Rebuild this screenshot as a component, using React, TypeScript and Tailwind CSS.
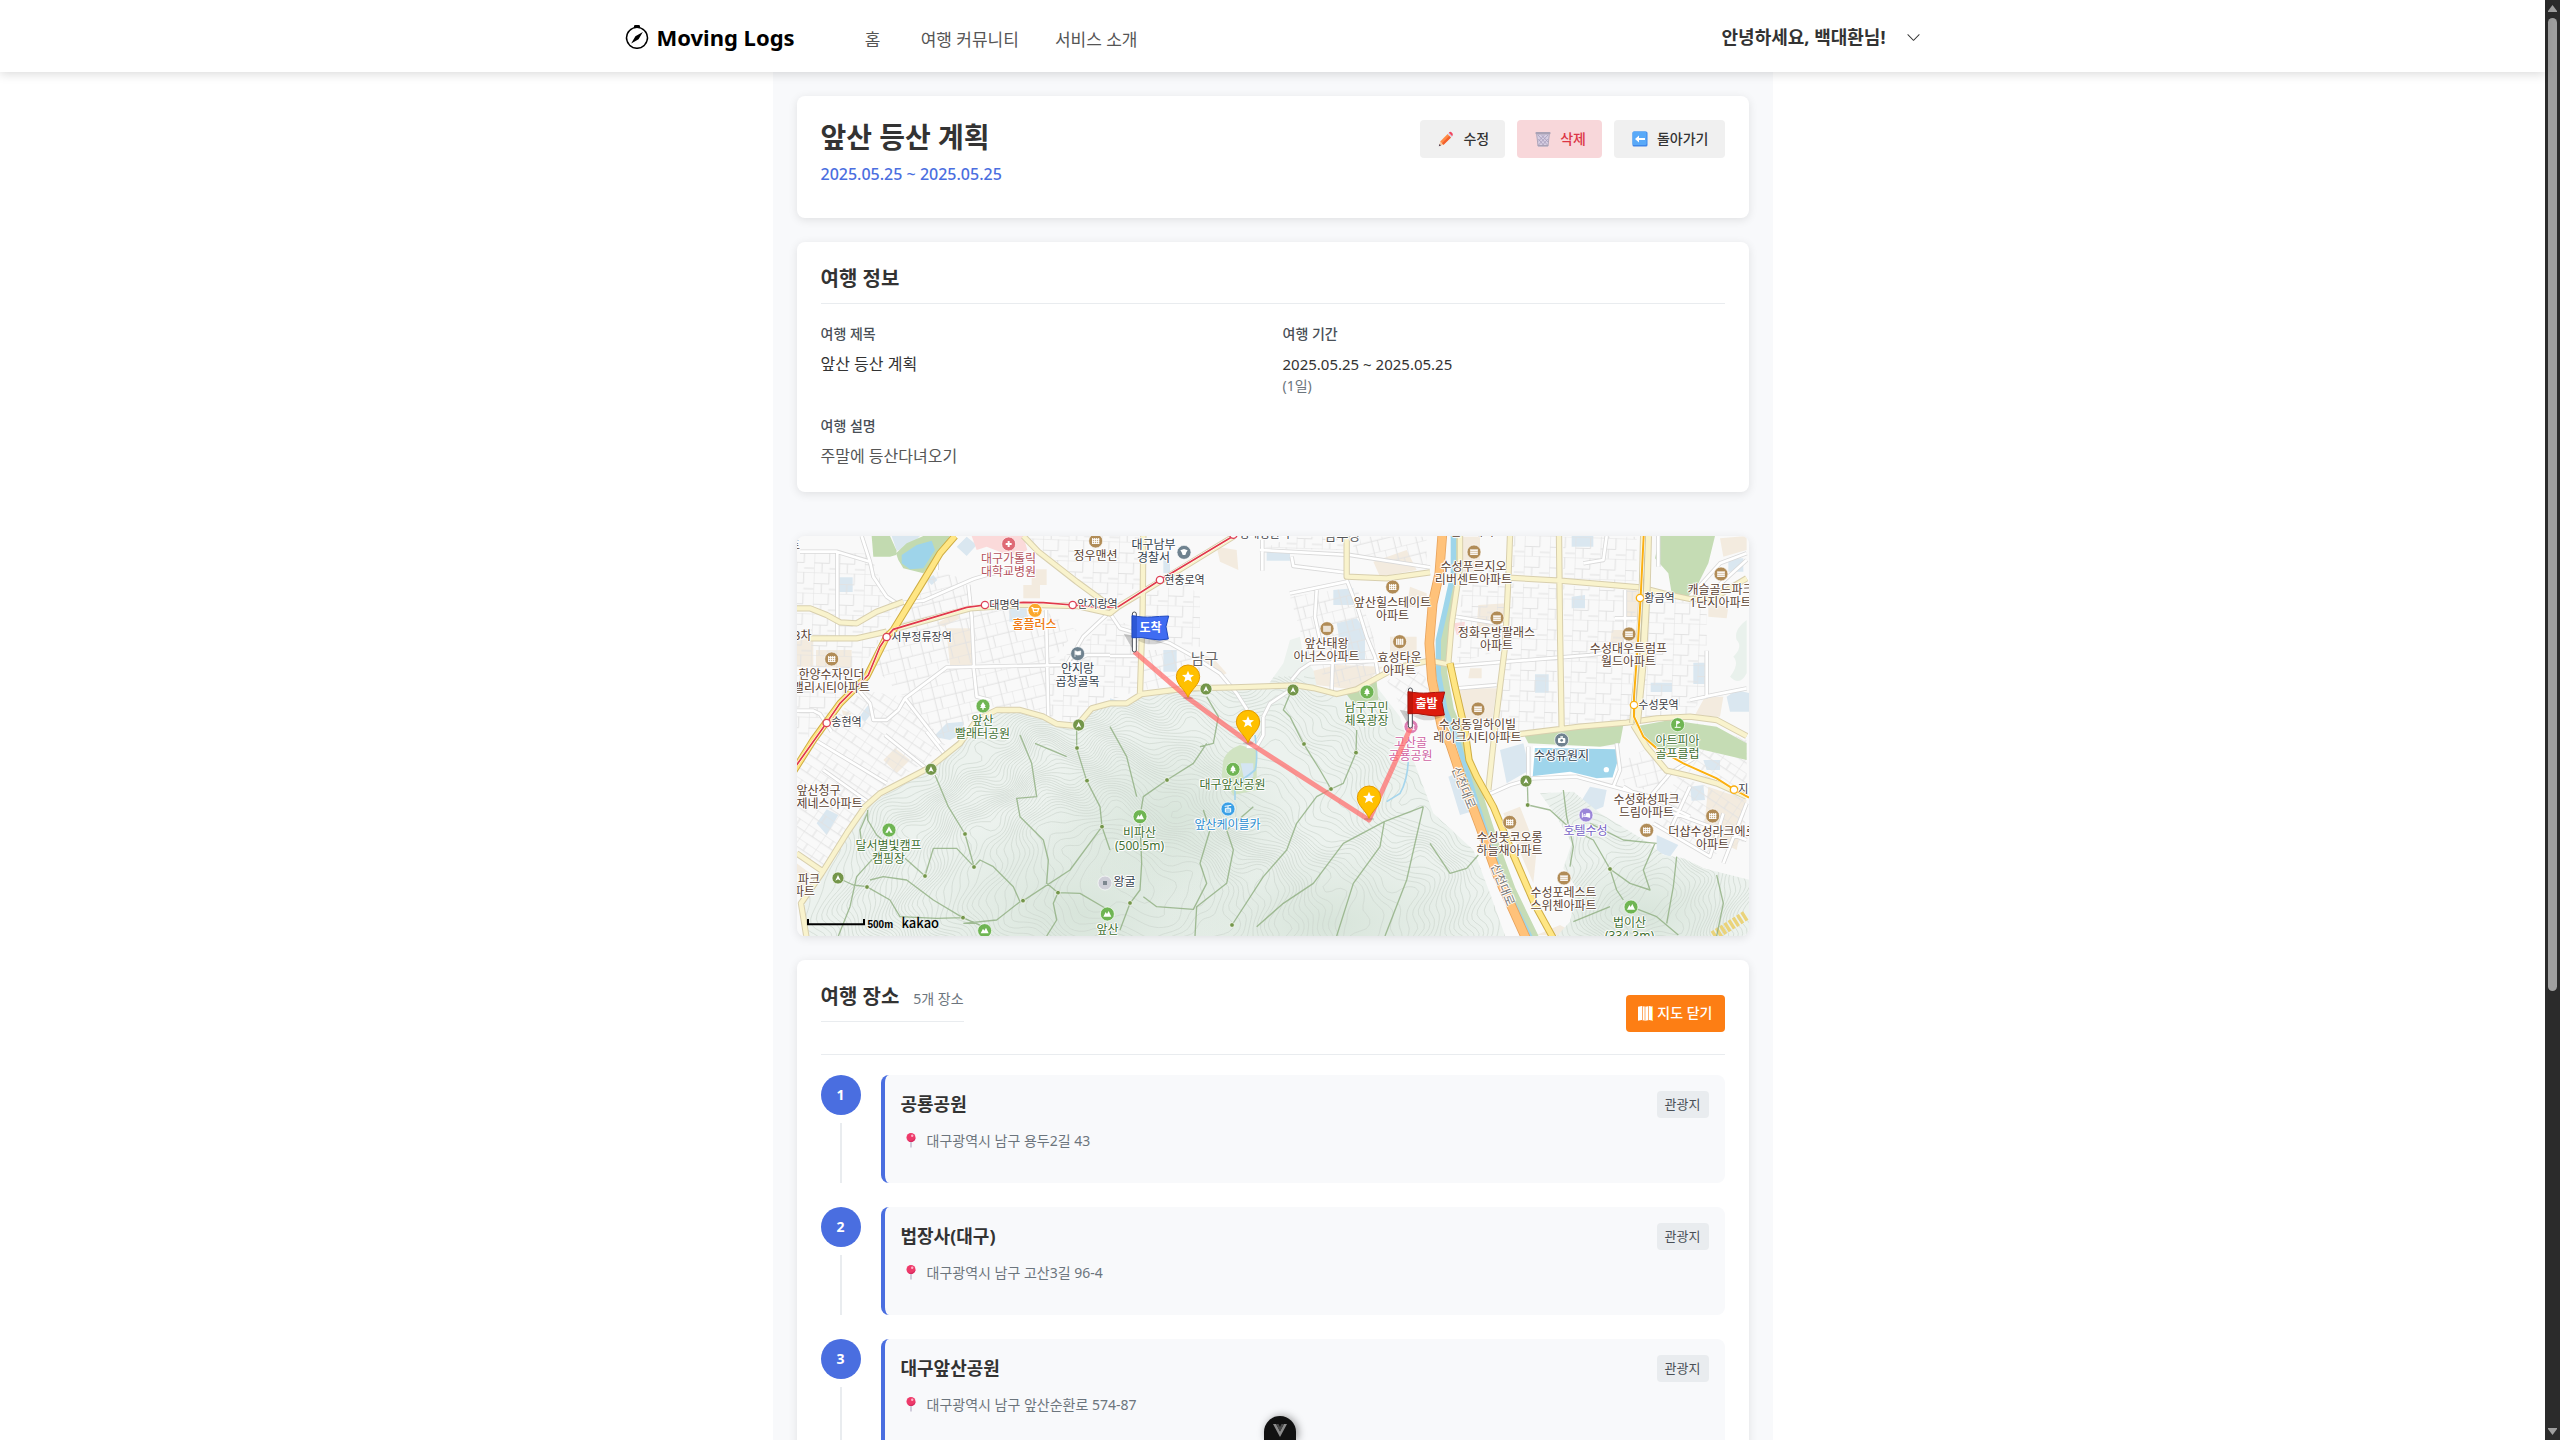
import React from "react";
import { BsChevronDown, BsCompass } from "react-icons/bs";

const places = [
  { name: "공룡공원", address: "대구광역시 남구 용두2길 43", kind: "관광지" },
  { name: "법장사(대구)", address: "대구광역시 남구 고산3길 96-4", kind: "관광지" },
  { name: "대구앞산공원", address: "대구광역시 남구 앞산순환로 574-87", kind: "관광지" },
];

/* ---------- small drawings ---------- */

function PencilIcon() {
  return (
    <svg viewBox="0 0 16 16" className="size-4" aria-hidden="true">
      <path d="M.8 15.200l1.600-5 3.400 3.400z" fill="#f7c9a0" />
      <path d="M.8 15.200l.7-2.200 1.500 1.500z" fill="#4a3a50" />
      <path d="M2.200 10.400l7.400-7.400 3.400 3.400-7.400 7.400z" fill="#ff8a45" />
      <path d="M4 12.200l7.400-7.400 1.600 1.600-7.400 7.400z" fill="#f2602e" />
      <path d="M9.600 3l1.200-1.200 3.400 3.400-1.200 1.200z" fill="#d9d3e3" />
      <path d="M10.800 1.800c1-1.200 2-1.200 2.900-.4 1 .9 1.700 2.100.5 3.800z" fill="#f0455f" />
    </svg>
  );
}

function TrashIcon() {
  return (
    <svg viewBox="0 0 16 16" className="size-4" aria-hidden="true">
      <path d="M1.500 3h13l-1.400 12.500H2.900z" fill="#d6cee2" />
      <path
        d="M3 4l9.500 10M6.500 4l6.500 7M3.300 8l6 7M13 4L3.500 14M9.500 4L3.200 10.500M12.800 8l-6 7"
        stroke="#a69cba"
        strokeWidth=".8"
      />
      <path d="M1.700 3.400L3 15M14.300 3.400L13 15" stroke="#a9a2b5" strokeWidth=".9" />
      <rect x="0.500" y="1" width="15" height="2.400" rx=".8" fill="#a9a2b5" />
      <path d="M2.800 14h10.400l-.2 1.500H3z" fill="#a9a2b5" />
    </svg>
  );
}

function BackIcon() {
  return (
    <svg viewBox="0 0 16 16" className="size-4" aria-hidden="true">
      <rect x=".5" y=".5" width="15" height="15" rx="1.500" fill="#3f86e8" />
      <rect x=".5" y=".5" width="14" height="13.500" rx="1.500" fill="#58a9f8" />
      <path d="M3 8l4-3.500v2.500h6v2H7v2.500z" fill="#fff" />
    </svg>
  );
}

function MapIcon() {
  return (
    <svg viewBox="0 0 15 15" className="size-[15px]" aria-hidden="true">
      <path d="M0 .8l3.700-.8 3.700.8 3.700-.8L15 .8v14l-3.900-.8-3.700.8-3.700-.8L0 14.800z" fill="#fff" />
      <path d="M4.500 0v14M7 .8v14M10.500 0v14" stroke="#ffab66" strokeWidth="1" />
      <path d="M14.500.8v14" stroke="#ffe14a" strokeWidth="1" />
    </svg>
  );
}

function PushpinIcon() {
  return (
    <svg viewBox="0 0 10 15" className="h-[15px] w-[10px]" aria-hidden="true">
      <path d="M5 8v6.500" stroke="#b7aec6" strokeWidth="1.200" />
      <circle cx="5" cy="4.500" r="4.500" fill="#ee3a6a" />
      <path d="M1.500 7.300A4.500 4.500 0 0 0 9.500 4.500 6 6 0 0 1 1.500 7.300z" fill="#d42a60" />
      <circle cx="6.200" cy="2.800" r="1.200" fill="#ffb3c8" />
    </svg>
  );
}

/* ---------- map ---------- */

type Peak = [number, number, number, number];
const peaks: Peak[] = [
  [600, 1230, 300, 1.1], [980, 1180, 300, 1.2], [1050, 860, 220, 0.9], [760, 800, 190, 0.7],
  [420, 1000, 170, 0.45], [1400, 1080, 200, 0.6], [1280, 1260, 240, 0.7], [1600, 700, 150, 0.5],
  [1190, 600, 140, 0.4], [1700, 1200, 260, 0.8], [1900, 1120, 160, 0.5], [2540, 1160, 190, 1],
  [2420, 900, 120, 0.3], [2700, 1080, 130, 0.4], [1460, 560, 120, 0.35],
];

function heightAt(x: number, y: number) {
  const wx = x + 26 * Math.sin(y / 43) + 12 * Math.sin(x / 31 + y / 19);
  const wy = y + 24 * Math.sin(x / 37) + 11 * Math.sin(y / 23 - x / 29);
  let h = 0;
  for (const [px, py, s, a] of peaks) {
    h += a * Math.exp(-((wx - px) ** 2 + (wy - py) ** 2) / (2 * s * s));
  }
  return h;
}

function contourPath() {
  const step = 14;
  const gap = 0.045;
  const cols = Math.ceil(2880 / step);
  const rows = Math.ceil(820 / step);
  const grid: number[][] = [];
  for (let j = 0; j <= rows; j++) {
    grid.push([]);
    for (let i = 0; i <= cols; i++) grid[j].push(heightAt(i * step, 440 + j * step) / gap);
  }
  const out: string[] = [];
  for (let j = 0; j < rows; j++) {
    for (let i = 0; i < cols; i++) {
      const c = [grid[j][i], grid[j][i + 1], grid[j + 1][i + 1], grid[j + 1][i]];
      const lo = Math.ceil(Math.min(...c));
      const hi = Math.floor(Math.max(...c));
      const pos = [[i, j], [i + 1, j], [i + 1, j + 1], [i, j + 1]];
      for (let l = lo; l <= hi; l++) {
        const pts: string[] = [];
        for (let k = 0; k < 4; k++) {
          const a = c[k];
          const b = c[(k + 1) % 4];
          if (a < l !== b < l) {
            const t = (l - a) / (b - a);
            const p = pos[k];
            const q = pos[(k + 1) % 4];
            const x = (p[0] + (q[0] - p[0]) * t) * step;
            const y = 440 + (p[1] + (q[1] - p[1]) * t) * step;
            pts.push(`${x.toFixed(0)} ${y.toFixed(0)}`);
          }
        }
        if (pts.length >= 2) out.push(`M${pts[0]}L${pts[1]}`);
      }
    }
  }
  return out.join("");
}

const contours = contourPath();

const westHills =
  "M50 1230L33 1120 95 1030 170 910 225 830 300 785 430 715 520 640 560 560 690 540 800 582 860 588 910 535 1010 525 1055 492 1190 478 1430 470 1480 400 1500 330 1530 320 1540 380 1570 420 1580 468 1640 492 1760 470 1830 560 1870 690 1930 850 2050 960 2100 1090 2150 1230Z";
const eastHills =
  "M2250 790L2350 785 2430 850 2480 880 2570 935 2620 975 2680 985 2740 1015 2820 1035 2880 1050 2880 1230 2290 1230 2340 1175 2360 1075 2320 1015 2345 940 2300 860Z";

const whiteRoads = [
  "M30 65H140L240 95 250 140 290 200 320 220 400 212 550 147 590 135 660 120", "M142 65V320",
  "M215 18L240 95", "M535 165L545 260 552 405", "M768 240L775 560", "M345 505L470 412 830 405 880 320 960 245",
  "M830 405L890 375H960", "M205 480L240 520 250 570 290 570 325 540 345 505 450 640", "M20 542H70L90 552 125 605",
  "M550 405L560 500 600 510", "M440 120V90", "M285 615L440 740M410 605L470 680", "M75 630L290 760", "M100 720L240 820",
  "M1410 60L1680 75 1920 112", "M1417 30V122", "M1505 80L1510 108 1670 128", "M1500 190L1670 155",
  "M1670 150L1705 240 1730 320 1755 380 1765 440", "M1580 180L1575 260 1590 330", "M1505 450L1530 420 1560 400 1790 392",
  "M1630 340L1625 480", "M1420 560L1440 520 1500 480M1420 560V615L1400 650H1370", "M960 250L990 295 1140 340 1220 385 1290 430 1340 490 1372 540",
  "M960 378H1060", "M1990 408L2400 375 2450 368", "M2475 265H2540M2505 180V350", "M1995 260L2150 285", "M2000 475L2120 465",
  "M2750 362V500L2700 510M2745 500L2870 475", "M2605 18V110", "M2450 18L2440 90 2380 100", "M2080 800L2160 765 2230 745 2360 740 2470 770 2580 800 2700 860",
  "M2215 650V740", "M2480 640L2490 720 2470 770", "M2580 800L2640 730 2720 680", "M2590 880L2760 980 2800 850", "M2700 770L2640 900", "M2870 820L2800 1000",
  "M2500 770L2600 830 2870 930", "M2760 190L2870 90M2700 200L2790 100 2870 70",
];

const creamRoads = [
  "M20 235H60L110 255 150 277 200 280 260 245 340 215", "M60 325H200L290 305", "M310 298L540 235 700 224 860 228 960 250 985 230 1180 112 1330 20",
  "M700 18L745 65 860 155 965 232", "M1060 18L1058 240 1050 490", "M1670 18V140L1790 145 1920 127",
  "M50 1225L33 1120 95 1030 170 910 225 830 270 790 420 712 510 640 560 570 620 540H690L760 560 800 582 860 588 905 535 960 520H1010L1055 492 1190 475 1330 472 1520 466 1570 474 1640 492 1700 478 1750 450 1820 412 1920 392 1985 405",
  "M20 970L100 1025", "M2010 18V110L1985 280 1975 400", "M2160 18L2155 150 2145 350 2120 550 2095 780",
  "M2155 143L2310 152 2550 172 2620 190 2700 207 2770 205 2870 145", "M2307 18L2310 300 2315 600",
  "M2110 622L2370 590 2510 578 2600 565 2700 560 2780 570 2870 618", "M2530 585L2570 650 2630 722 2700 738 2780 760 2870 800",
];

const trails = [
  "M435 735L475 830 525 912 552 1010", "M233 840V870L260 915 290 940M232 850L210 900 215 940", "M145 1218L180 1130 200 1040 290 940",
  "M345 985L405 1038 430 955 500 955 552 1010 570 990 610 1010 670 1070 690 1115 620 1170 520 1180",
  "M144 1044L190 1065 230 1070 300 1110 330 1160 440 1165 518 1163 580 1190", "M240 1050L280 1040 350 1050 430 1110 518 1163",
  "M690 615L725 700 740 800 680 805 690 860 760 930 775 990 770 1060 804 1088", "M735 640L830 680M860 570V655L890 752 930 830 936 890 840 1020 700 1112",
  "M804 1088L790 1120 800 1170 770 1218", "M804 1088L870 1090 950 1137", "M936 890L960 960", "M1250 640L1210 700 1131 750 1060 800 1050 860",
  "M1050 870L1055 1000 1050 1080 1020 1120 990 1200", "M1250 500L1285 560 1270 640 1230 650", "M960 590L1010 680 1040 800",
  "M1060 1100L1100 1130 1210 1138 1250 1060 1230 1000 1260 900 1240 840", "M1215 1218L1220 1130 1310 1060 1330 960 1310 900 1390 830",
  "M1326 1185L1420 1040 1490 960 1520 880 1580 800 1623 777", "M1505 480L1480 540 1500 560 1540 640 1590 720 1623 777 1660 760 1698 668 1700 600",
  "M1400 1190L1480 1120 1570 1060 1660 940 1783 875 1900 830", "M1783 875L1770 950 1690 1060 1640 1218", "M1900 830L1850 1050 1785 1218", "M1920 940L1980 1030 2030 1015 2065 975",
  "M2212 755L2214 825 2280 840 2340 895 2410 930 2460 1017 2480 1080 2500 1110", "M2320 780L2330 860 2350 950 2340 1010",
  "M2460 1017L2520 1060 2580 1080 2560 1020 2595 940", "M2523 1130L2600 1160 2665 1215", "M2460 1130L2350 1175M2660 980L2650 1070 2630 1180M2780 1035L2800 1120 2780 1218",
  "M2400 880L2500 930 2600 940",
];

const lightBlue = [
  "M305 18H390L360 50 320 62Z", "M500 50L530 20 560 45 530 78Z", "M148 142H188V186H148Z", "M80 880L110 838 145 855 110 915Z", "M208 560L235 525 245 550 225 575Z",
  "M410 150L430 135 442 150 425 165Z", "M430 620L470 580 520 575V610L480 630Z", "M658 235H710V275H658Z", "M1120 80H1140V130H1120Z",
  "M1430 62H1500V92H1430Z", "M1630 180L1690 175V225H1630Z", "M1640 280L1700 265 1725 300V400L1660 395Z", "M960 505L1010 520 1010 560 960 580Z", "M1080 500H1115V545H1080Z", "M1120 360H1160V425H1120Z",
  "M2345 18H2410V50H2345ZM2345 200L2385 195V235H2345Z", "M2235 433H2276V488H2235Z", "M2710 398H2744V462H2710Z", "M2582 458H2646V486H2582Z", "M2815 85H2860V125H2815Z", "M2810 500L2840 480 2880 490V545H2820Z",
  "M2130 660L2200 640 2220 720 2150 760Z", "M1975 740L2020 720 2060 840 2010 855Z", "M2370 820L2400 770 2450 780 2440 830 2380 855Z", "M2600 915L2665 945 2640 980 2600 965Z", "M2700 770L2740 765 2745 810 2705 812Z", "M2740 690H2790V720H2750Z",
];
const beige = [
  "M440 280L500 250 510 265 460 290Z", "M468 295L545 295 548 405H480Z", "M20 325H70V410H20ZM78 360H185V412H78Z", "M725 118H770V165H750V205H700V165H725Z",
  "M280 690L315 655 360 690 320 730Z", "M155 540L185 550 165 575Z", "M1280 50L1340 60 1345 120 1290 95Z", "M1225 370L1290 440 1310 430 1270 385Z",
  "M1750 95L1850 60 1880 120 1770 140ZM1860 170L1910 190V230H1850Z", "M1540 430L1640 405 1780 410 1700 480 1580 465Z", "M1800 320L1880 320 1880 380 1800 380Z",
  "M2010 20H2070V120L2020 130ZM2065 225L2150 220V290H2060Z", "M2000 475H2120L2105 580H2030Z", "M2505 180H2545V270H2505Z", "M2790 25L2870 18V60L2800 80Z",
  "M2715 555L2745 500 2800 500 2790 560Z", "M2140 850L2190 830 2240 960 2230 1060Z", "M2755 770L2870 810 2840 960 2740 910Z", "M2330 1060L2370 1000 2350 1000Z", "M2465 300H2540V350H2460Z", "M2755 225L2815 230 2810 265 2755 260Z", "M20 1000L60 1030 40 1080H20Z", "M2240 1215L2310 1185 2370 1218Z", "M2040 415H2075V445H2035Z",
];

/* Each district is a hatched block of side streets: outline and street direction. */
const districts: [string, string][] = [
  ["M20 70H240L290 200 330 230 250 320H20Z", "url(#streetsA)"],
  ["M20 330H270L200 440 60 620H20Z", "url(#streetsA)"],
  ["M60 640L215 480 340 500 470 640 400 700 260 785 100 1020 20 970V710Z", "url(#streetsC)"],
  ["M420 120L540 150 530 230 330 285Z", "url(#streetsB)"],
  ["M300 310L540 240 760 240 860 300 780 400H470L340 500 240 400Z", "url(#streetsB)"],
  ["M345 510L470 415H770V550L690 530 600 530 500 600 450 630Z", "url(#streetsB)"],
  ["M700 18L960 220 985 200 1060 160V18Z", "url(#streetsA)"],
  ["M780 410L890 330 960 260 1050 300V480L960 510 860 580 780 560Z", "url(#streetsA)"],
  ["M1070 190L1190 160 1230 200V350L1060 340Z", "url(#streetsA)"],
  ["M1060 360L1160 360 1230 400V460L1060 480Z", "url(#streetsB)"],
  ["M1510 20H1660V60L1420 55Z", "url(#streetsA)"],
  ["M1690 20H1910V110L1690 75Z", "url(#streetsB)"],
  ["M1500 200L1700 170 1750 320 1770 440 1640 470 1560 400Z", "url(#streetsB)"],
  ["M1790 450L1900 420 1940 560 1850 560Z", "url(#streetsC)"],
  ["M2020 120H2150L2135 360 2000 400Z", "url(#streetsA)"],
  ["M2165 160L2300 165V590L2120 610Z", "url(#streetsA)"],
  ["M2170 18H2300V145L2165 130Z", "url(#streetsA)"],
  ["M2320 20H2540V165L2320 150ZM2320 165L2540 180 2520 570 2325 590Z", "url(#streetsA)"],
  ["M2570 200L2750 215V360L2745 500 2700 550 2550 570Z", "url(#streetsA)"],
  ["M2560 660L2650 730 2600 790 2500 760 2490 700Z", "url(#streetsB)"],
  ["M2660 740L2860 800 2870 930 2760 980 2600 880Z", "url(#streetsC)"],
  ["M2700 570L2870 630V790L2700 730 2600 640Z", "url(#streetsC)"],
];

type PoiKind =
  | "apt" | "hospital" | "cart" | "flag" | "tree" | "trail" | "police" | "museum" | "golf"
  | "camera" | "camp" | "peak" | "spot" | "cable" | "hotel";

const pois: [PoiKind, number, number][] = [
  ["apt", 125, 387], ["apt", 917, 33], ["hospital", 656, 42], ["cart", 735, 241], ["flag", 863, 371], ["tree", 579, 528],
  ["trail", 866, 585], ["police", 1182, 67], ["apt", 1808, 171], ["apt", 1611, 296], ["apt", 1829, 335], ["trail", 1248, 477],
  ["trail", 1509, 480], ["tree", 1731, 486], ["museum", 1863, 590], ["apt", 2052, 66], ["apt", 2121, 264], ["apt", 2517, 312],
  ["apt", 2793, 132], ["apt", 2064, 537], ["golf", 2663, 584], ["camera", 2315, 630], ["trail", 423, 718], ["trail", 144, 1044],
  ["camp", 297, 900], ["peak", 584, 1202], ["spot", 945, 1059], ["peak", 952, 1152], ["tree", 1329, 718], ["cable", 1314, 837],
  ["peak", 1050, 860], ["trail", 2208, 753], ["hotel", 2388, 855], ["apt", 2159, 877], ["apt", 2570, 901], ["apt", 2768, 858],
  ["apt", 2322, 1044], ["peak", 2523, 1131],
];

const poiFill: Record<PoiKind, string> = {
  apt: "#b18c57", hospital: "#df6a75", cart: "#fba82c", flag: "#6f828f", tree: "#6fb553", trail: "#74964a", police: "#6f828f",
  museum: "#dd7fb4", golf: "#6fb553", camera: "#6f828f", camp: "#6fb553", peak: "#6fb553", spot: "#cfcfd8", cable: "#3aa0e6", hotel: "#9b86d8",
};

const poiGlyph: Record<PoiKind, React.ReactNode> = {
  apt: <path d="M-9-9V9M-3-9V9M3-9V9M9-9V9M-11-5H11M-11 1H11M-11 7H11" stroke="#fff" strokeWidth="3" />,
  hospital: <path d="M0-9V9M-9 0H9" stroke="#fff" strokeWidth="6" />,
  cart: <path d="M-11-8H-7L-4 4H8L11-5H-6M-3 9h1M6 9h1" stroke="#fff" strokeWidth="4" fill="none" />,
  flag: <path d="M-8-10V10M-7-8L0-6 9-8V3L0 4-7 2Z" stroke="#fff" strokeWidth="2" fill="#fff" />,
  tree: <path d="M0-12L8 0H5L9 6H2V11H-2V6H-9L-5 0H-8Z" fill="#fff" />,
  trail: <path d="M0-9L8 8 0 4-8 8Z" fill="#fff" />,
  police: <path d="M-11-6L0-10 11-6 7 0 4 8H-4L-7 0Z" fill="#fff" />,
  museum: <path d="M-10-4L0-10 10-4ZM-8-2V8M0-2V8M8-2V8M-11 9H11" stroke="#fff" strokeWidth="3" fill="#fff" />,
  golf: <path d="M-3-11V7M-3-11L7-7-3-2M-9 8H9" stroke="#fff" strokeWidth="3" fill="#fff" />,
  camera: (
    <>
      <rect x="-11" y="-6" width="22" height="15" rx="3" fill="#fff" />
      <circle cy="1" r="4" fill="#6f828f" />
      <path d="M-4-9H4" stroke="#fff" strokeWidth="4" />
    </>
  ),
  camp: <path d="M0-11L11 8H4L0 1-4 8H-11Z" fill="#fff" />,
  peak: <path d="M-12 8L-5-6-1 0 4-9 12 8Z" fill="#fff" />,
  spot: <rect x="-6" y="-6" width="12" height="12" fill="#7d8790" />,
  cable: <path d="M-10-8L10-11M0-9V-3M-8-2H8V9H-8ZM-8 3H8" stroke="#fff" strokeWidth="3" fill="none" />,
  hotel: <path d="M-11-7V8M-11 3H11V8M-7-1H-2M1-4H11V3H1Z" stroke="#fff" strokeWidth="3" fill="#fff" />,
};

const apt = "text-[#5a4232]";
const park = "text-[#3f7030]";
const station = "text-[#3c4046] text-[11px]";
const slate = "text-[#34424e]";

const mapLabels: { x: number; y: number; lines: string[]; tone: string }[] = [
  { x: 656, y: 87, lines: ["대구가톨릭", "대학교병원"], tone: "text-[#b4545f]" },
  { x: 917, y: 77, lines: ["정우맨션"], tone: apt },
  { x: 646, y: 226, lines: ["대명역"], tone: station },
  { x: 925, y: 223, lines: ["안지랑역"], tone: station },
  { x: 735, y: 285, lines: ["홈플러스"], tone: "text-[#ee7a10] font-medium" },
  { x: 396, y: 320, lines: ["서부정류장역"], tone: station },
  { x: 38, y: 317, lines: ["3차"], tone: apt },
  { x: 15, y: 48, lines: ["트"], tone: apt },
  { x: 125, y: 434, lines: ["한양수자인더", "밸리시티아파트"], tone: apt },
  { x: 171, y: 577, lines: ["송현역"], tone: station },
  { x: 863, y: 417, lines: ["안지랑", "곱창골목"], tone: slate },
  { x: 579, y: 573, lines: ["앞산", "빨래터공원"], tone: park },
  { x: 1092, y: 46, lines: ["대구남부", "경찰서"], tone: slate },
  { x: 1185, y: 149, lines: ["현충로역"], tone: station },
  { x: 1425, y: 12, lines: ["영대병원역"], tone: station },
  { x: 1658, y: 18, lines: ["남부장"], tone: "text-[#555555] text-[13px]" },
  { x: 1808, y: 218, lines: ["앞산힐스테이트", "아파트"], tone: apt },
  { x: 1611, y: 342, lines: ["앞산태왕", "아너스아파트"], tone: apt },
  { x: 1829, y: 384, lines: ["효성타운", "아파트"], tone: apt },
  { x: 1245, y: 388, lines: ["남구"], tone: "text-[#666666] text-[15px]" },
  { x: 1731, y: 535, lines: ["남구구민", "체육광장"], tone: park },
  { x: 1864, y: 639, lines: ["고산골", "공룡공원"], tone: "text-[#cf62a3]" },
  { x: 2052, y: 112, lines: ["수성푸르지오", "리버센트아파트"], tone: apt },
  { x: 2065, y: 6, lines: ["힐스테이트"], tone: apt },
  { x: 2122, y: 310, lines: ["정화우방팔래스", "아파트"], tone: apt },
  { x: 2516, y: 357, lines: ["수성대우트럼프", "월드아파트"], tone: apt },
  { x: 2793, y: 181, lines: ["캐슬골드파크", "1단지아파트"], tone: apt },
  { x: 2610, y: 203, lines: ["황금역"], tone: station },
  { x: 2607, y: 525, lines: ["수성못역"], tone: station },
  { x: 2063, y: 586, lines: ["수성동일하이빌", "레이크시티아파트"], tone: apt },
  { x: 2663, y: 632, lines: ["아트피아", "골프클럽"], tone: park },
  { x: 87, y: 784, lines: ["앞산청구"], tone: apt },
  { x: 120, y: 822, lines: ["제네스아파트"], tone: apt },
  { x: 42, y: 1049, lines: ["린파크"], tone: apt },
  { x: 28, y: 1087, lines: ["아파트"], tone: apt },
  { x: 297, y: 947, lines: ["달서별빛캠프", "캠핑장"], tone: park },
  { x: 1004, y: 1056, lines: ["왕굴"], tone: slate },
  { x: 953, y: 1200, lines: ["앞산"], tone: park },
  { x: 1329, y: 765, lines: ["대구앞산공원"], tone: park },
  { x: 1314, y: 885, lines: ["앞산케이블카"], tone: "text-[#2a8dd0]" },
  { x: 1051, y: 910, lines: ["비파산", "(500.5m)"], tone: park },
  { x: 2315, y: 679, lines: ["수성유원지"], tone: slate },
  { x: 2387, y: 904, lines: ["호텔수성"], tone: "text-[#7764c6]" },
  { x: 2160, y: 923, lines: ["수성못코오롱", "하늘채아파트"], tone: apt },
  { x: 2570, y: 811, lines: ["수성화성파크", "드림아파트"], tone: apt },
  { x: 2768, y: 907, lines: ["더샵수성라크에르", "아파트"], tone: apt },
  { x: 2322, y: 1090, lines: ["수성포레스트", "스위첸아파트"], tone: apt },
  { x: 2521, y: 1179, lines: ["법이산", "(334.3m)"], tone: park },
  { x: 2893, y: 777, lines: ["지산역"], tone: station },
  { x: 2022, y: 775, lines: ["신천대로"], tone: "text-[#777777] rotate-[68deg]" },
  { x: 2140, y: 1065, lines: ["신천대로"], tone: "text-[#777777] rotate-[68deg]" },
];

const halo = "[text-shadow:1px_0_0_#fff,-1px_0_0_#fff,0_1px_0_#fff,0_-1px_0_#fff,1px_1px_1px_#fff,-1px_-1px_1px_#fff]";

function Star({ x, y }: { x: number; y: number }) {
  return (
    <g transform={`translate(${x} ${y})`}>
      <ellipse cy="64" rx="16" ry="4" fill="#000" opacity=".12" />
      <path d="M0 62C-8 40-35 24-35 0A35 35 0 1 1 35 0C35 24 8 40 0 62Z" fill="#ffc000" stroke="#e39a00" strokeWidth="3" />
      <path d="M0-18L5-6 18-5 8 3 12 16 0 9-12 16-8 3-18-5-5-6Z" fill="#fff" />
    </g>
  );
}

function Flag({ x, y, fill, edge }: { x: number; y: number; fill: string; edge: string }) {
  return (
    <g transform={`translate(${x} ${y})`}>
      <path d="M-2 118L-32 66 -2 72Z" fill="#000" opacity=".2" />
      <path d="M8 84Q50 112 100 84L60 74Z" fill="#000" opacity=".15" />
      <rect x="-6" y="1" width="12" height="120" rx="6" fill="#fff" stroke="#4a4f57" strokeWidth="3" />
      <path d="M-7 12Q30 18 52 16T103 13L95 45 102 82Q75 88 50 82T-7 78Z" fill={fill} stroke={edge} strokeWidth="3" />
      <path d="M-7 12H8V78H-7Z" fill={edge} opacity=".55" />
    </g>
  );
}

function TripMap() {
  return (
    <section
      aria-label="여행 지도"
      className="mt-11 flex h-[400px] justify-center overflow-hidden rounded-lg bg-[#f8f8f8] shadow-[0_2px_10px_rgba(0,0,0,0.1)]"
    >
      <div className="relative h-full w-[952px] shrink-0">
        <svg viewBox="21 18 2856 1200" className="block size-full" fill="none" aria-hidden="true">
          <defs>
            <pattern id="streetsA" width="76" height="62" patternUnits="userSpaceOnUse" patternTransform="rotate(2)">
              <path d="M0 0H76M0 34H46M46 0V34M24 34V62M0 0V62M46 50H76" stroke="#e2e2e2" strokeWidth="3" />
            </pattern>
            <pattern id="streetsB" width="66" height="70" patternUnits="userSpaceOnUse" patternTransform="rotate(-14)">
              <path d="M0 0H66M0 36H66M0 0V36M34 0V70M52 36V70" stroke="#e2e2e2" strokeWidth="3" />
            </pattern>
            <pattern id="streetsC" width="60" height="50" patternUnits="userSpaceOnUse" patternTransform="rotate(34)">
              <path d="M0 0H60M0 26H60M0 0V50M30 0V26" stroke="#e2e2e2" strokeWidth="3" />
            </pattern>
            <clipPath id="hills">
              <path d={westHills} />
              <path d={eastHills} />
            </clipPath>
            <radialGradient id="ridge">
              <stop offset="0" stopColor="#cfdfd2" stopOpacity=".7" />
              <stop offset="1" stopColor="#cfdfd2" stopOpacity="0" />
            </radialGradient>
          </defs>
          <rect width="2900" height="1240" fill="#f9f9f9" />
          <path d={beige.join("")} fill="#f3ebdf" />
          <path d={lightBlue.join("")} fill="#dae7f0" />
          <path d="M545 18H700L712 60 680 75 640 70 590 50 560 60Z M1990 280L2025 275 2020 310 2000 315Z" fill="#fbdada" />
          {districts.map(([d, fill]) => (
            <path key={d} d={d} fill={fill} />
          ))}
          <path d={westHills + eastHills} fill="#ecf2ee" />
          <g clipPath="url(#hills)">
            <ellipse cx="880" cy="1150" rx="520" ry="330" fill="url(#ridge)" />
            <ellipse cx="1150" cy="860" rx="400" ry="260" fill="url(#ridge)" />
            <ellipse cx="1620" cy="1180" rx="480" ry="240" fill="url(#ridge)" />
            <ellipse cx="2560" cy="1150" rx="300" ry="180" fill="url(#ridge)" />
            <path d={contours} stroke="#cdd7cf" strokeWidth="2" />
          </g>
          <path d="M2870 270Q2830 300 2840 330 2860 350 2830 380 2850 400 2820 440 2850 470 2870 430Z" fill="#e9f1ec" />
          <path d="M245 18H300L320 62 318 75 300 80H250Z M318 70L350 40 400 18H480L440 80 400 130 340 115 325 90Z" fill="#c2dab0" />
          <path d="M2610 18H2775L2755 100 2715 180 2690 205 2645 190 2635 130 2595 85Z" fill="#c5dcb4" />
          <path d="M2200 610L2500 585 2490 640 2430 650 2215 640Z" fill="#c5dcb4" />
          <path d="M2530 590L2640 570 2780 590 2870 640V690L2700 650 2600 660Z" fill="#c5dcb4" />
          <path d="M1660 480L1760 455 1765 510 1690 520Z" fill="#c2dab0" />
          <path d="M1300 690Q1310 660 1350 645L1400 660V780L1330 795 1295 740Z" fill="#d0e3c2" />
          <path d="M1352 700H1390V740L1365 760Z" fill="#d4e5f2" />
          <path d="M335 75L380 45 425 32 435 60 400 115 360 118 335 100Z" fill="#9ed4ea" />
          <path d="M2232 650L2480 655 2490 680 2470 745 2420 748 2340 728 2225 742Z" fill="#9fd5eb" stroke="#fff" strokeWidth="6" />
          <circle cx="2449" cy="719" r="8" fill="#fff" />
          <path d="M1395 615Q1405 690 1395 720 1360 750 1335 760L1335 810M1855 640Q1860 740 1830 790L1790 815" stroke="#a5d5ec" strokeWidth="5" />

          <path d={whiteRoads.join("")} stroke="#d9d9d9" strokeWidth="13" strokeLinejoin="round" />
          <path d={whiteRoads.join("")} stroke="#ffffff" strokeWidth="8" strokeLinejoin="round" />

          <path d="M2000 18V140L1978 240 1955 340V430L1975 540 2015 640 2060 790 2105 930 2160 1080 2230 1225" stroke="#c6dcb6" strokeWidth="34" />
          <path d="M1990 18V130L1968 230 1945 330V430L1965 540 2005 640 2050 790 2095 930 2150 1080 2222 1225" stroke="#9ed5ea" strokeWidth="16" />

          <path d={creamRoads.join("")} stroke="#d8cfae" strokeWidth="19" strokeLinejoin="round" />
          <path d={creamRoads.join("")} stroke="#f9f3cd" strokeWidth="13" strokeLinejoin="round" />
          <path d="M2568 18L2564 180 2552 400 2535 580" stroke="#d8cfae" strokeWidth="36" />
          <path d="M2568 18L2564 180 2552 400 2535 580" stroke="#f9f3cd" strokeWidth="30" />
          <path d="M2566 18L2560 180 2548 400 2532 580" stroke="#c9c3a6" strokeWidth="4" />
          <path d="M2770 1218L2870 1155" stroke="#ead37a" strokeWidth="30" strokeDasharray="10 5" />

          {["M495 18L450 70 420 120 310 300 290 320 230 440 150 520 70 630 10 725", "M1980 400L1995 470 2025 600 2037 690 2060 740 2110 830 2170 975 2235 1125 2290 1225"].map((d) => (
            <g key={d} strokeLinejoin="round">
              <path d={d} stroke="#cfae45" strokeWidth="22" />
              <path d={d} stroke="#ffe684" strokeWidth="16" />
            </g>
          ))}
          <path d="M1958 0L1948 130 1928 220 1918 340 1926 450 1955 590 1980 640 2010 730 2070 890 2120 1030 2208 1225" stroke="#e8a45e" strokeWidth="29" />
          <path d="M1958 0L1948 130 1928 220 1918 340 1926 450 1955 590 1980 640 2010 730 2070 890 2120 1030 2208 1225" stroke="#ffc27a" strokeWidth="24" />

          <path d="M20 705L110 578 150 520 235 435 270 350 290 320 310 298 530 232 585 225 700 217 760 218 848 225 930 232 985 230 1110 150 1330 18" stroke="#ffffff" strokeWidth="8" />
          <path d="M20 705L110 578 150 520 235 435 270 350 290 320 310 298 530 232 585 225 700 217 760 218 848 225 930 232 985 230 1110 150 1330 18" stroke="#e03a4a" strokeWidth="5" />
          <path d="M2561 18L2552 200 2545 320 2532 500V560L2560 620 2600 655 2680 700 2780 745 2832 778 2877 803" stroke="#fff" strokeWidth="9" />
          <path d="M2561 18L2552 200 2545 320 2532 500V560L2560 620 2600 655 2680 700 2780 745 2832 778 2877 803" stroke="#fbb010" strokeWidth="6" />
          {[[290, 321], [585, 225], [848, 225], [110, 579], [1110, 150], [1330, 14]].map(([x, y]) => (
            <circle key={x} cx={x} cy={y} r="11" fill="#fff" stroke="#dd4257" strokeWidth="4" />
          ))}
          {[[2550, 204], [2532, 525], [2832, 779]].map(([x, y]) => (
            <circle key={x} cx={x} cy={y} r="11" fill="#fff" stroke="#fbb010" strokeWidth="4" />
          ))}

          <path d={trails.join("")} stroke="#8fae7f" strokeWidth="4" strokeLinejoin="round" opacity=".8" />
          {[[525, 912], [552, 1011], [405, 1038], [231, 1071], [699, 1112], [804, 1088], [519, 1163], [861, 654], [891, 752], [936, 890], [1131, 750], [1020, 1119], [1326, 1185], [1542, 642], [1698, 668], [1623, 777], [2213, 825], [2460, 1017]].map(([x, y]) => (
            <circle key={`${x}-${y}`} cx={x} cy={y} r="7" fill="#74964a" stroke="#fff" strokeWidth="2" />
          ))}

          {pois.map(([kind, x, y]) => (
            <g key={`${kind}-${x}-${y}`} transform={`translate(${x} ${y})`}>
              <circle r={kind === "trail" ? 18 : 21} fill={poiFill[kind]} stroke="#fff" strokeWidth="2" />
              {poiGlyph[kind]}
            </g>
          ))}
        </svg>

        {mapLabels.map((label) => (
          <div
            key={`${label.x}-${label.y}`}
            style={{ left: Math.round((label.x - 21) / 3), top: Math.round((label.y - 18) / 3) - 7 }}
            className={`absolute -translate-x-1/2 text-center text-xs leading-[13px] whitespace-nowrap ${halo} ${label.tone}`}
          >
            {label.lines.map((line) => (
              <div key={line} className="leading-[13px]">{line}</div>
            ))}
          </div>
        ))}

        <svg viewBox="21 18 2856 1200" className="absolute inset-0 block size-full" fill="none" aria-hidden="true">
          <path d="M1033 365L1195 505 1374 636 1737 870 1861 595" stroke="#ff6b6b" strokeOpacity=".72" strokeWidth="15" strokeLinejoin="round" />
          <Star x={1194} y={440} />
          <Star x={1374} y={576} />
          <Star x={1737} y={803} />
          <Flag x={1033} y={245} fill="#3f6cf2" edge="#1f49c0" />
          <Flag x={1861} y={473} fill="#dd1c0e" edge="#a51008" />
          <path d="M54 1167V1183H222V1167" stroke="#000" strokeWidth="6" />
        </svg>
        <span className="absolute top-[85px] left-[343px] text-xs leading-[13px] font-bold text-white">도착</span>
        <span className="absolute top-[161px] left-[619px] text-xs leading-[13px] font-bold text-white">출발</span>
        <span className="absolute bottom-[5px] left-[71px] font-['Liberation_Sans'] text-[10px] leading-[13px] font-bold text-black">500m</span>
        <span className="absolute bottom-[7px] left-[105px] font-['Noto_Sans_CJK_KR'] text-[13px] leading-[13px] font-medium text-black">kakao</span>
      </div>
    </section>
  );
}

/* ---------- page ---------- */

const card = "rounded-lg bg-white p-6 shadow-[0_2px_10px_rgba(0,0,0,0.1)]";
const actionButton = "flex h-[38px] items-center gap-[7px] rounded px-4 text-sm font-medium";

function Header() {
  return (
    <header className="relative z-10 shrink-0 bg-white shadow-[0_2px_10px_rgba(0,0,0,0.15)]">
      <div className="mx-auto flex h-[72px] max-w-[1320px] items-center px-3 pt-0.5">
        <a href="#home" className="flex items-center gap-2 text-black">
          <BsCompass className="size-6" />
          <span className="text-[22px] leading-8 font-bold">Moving Logs</span>
        </a>
        <nav className="ml-[70px] flex items-center pt-1.5 text-[17px] leading-6 text-[#555555]">
          <a href="#main" className="w-14">홈</a>
          <a href="#community" className="mr-9">여행 커뮤니티</a>
          <a href="#about">서비스 소개</a>
        </nav>
        <button type="button" className="ml-auto flex items-center gap-5 text-[18px] leading-6 font-bold text-[#333333]">
          안녕하세요, 백대환님!
          <BsChevronDown className="size-[15px]" />
        </button>
      </div>
    </header>
  );
}

function Summary() {
  return (
    <section className={`${card} flex items-start justify-between`}>
      <div>
        <h1 className="mb-2 text-[28px] leading-[34px] font-bold">앞산 등산 계획</h1>
        <p className="mb-2 text-base leading-6 font-medium text-[#4a6ee0]">2025.05.25 ~ 2025.05.25</p>
      </div>
      <div className="flex gap-3">
        <button type="button" className={`${actionButton} bg-[#f0f0f0]`}>
          <span className="flex w-5 justify-center"><PencilIcon /></span>수정
        </button>
        <button type="button" className={`${actionButton} bg-[#f8d7da] text-[#dc3545]`}>
          <span className="flex w-5 justify-center"><TrashIcon /></span>삭제
        </button>
        <button type="button" className={`${actionButton} bg-[#f0f0f0]`}>
          <span className="flex w-5 justify-center"><BackIcon /></span>돌아가기
        </button>
      </div>
    </section>
  );
}

function Info() {
  const term = "mb-2 text-sm leading-5 font-medium text-[#495057]";
  return (
    <section className={`${card} mt-6`}>
      <h2 className="mb-5 border-b border-[#e9ecef] pb-3 text-xl leading-[25px] font-bold">여행 정보</h2>
      <dl className="grid grid-cols-2 gap-x-5 gap-y-5">
        <div>
          <dt className={term}>여행 제목</dt>
          <dd className="text-base leading-6">앞산 등산 계획</dd>
        </div>
        <div>
          <dt className={term}>여행 기간</dt>
          <dd className="text-[15px] leading-6">
            2025.05.25 ~ 2025.05.25
            <span className="block text-sm leading-5 text-[#6c757d]">(1일)</span>
          </dd>
        </div>
        <div className="col-span-2">
          <dt className={term}>여행 설명</dt>
          <dd className="text-base leading-6 text-[#555555]">주말에 등산다녀오기</dd>
        </div>
      </dl>
    </section>
  );
}

function Places() {
  return (
    <section className={`${card} mt-6`}>
      <div className="mb-5 flex items-center justify-between border-b border-[#e9ecef] pb-3">
        <h2 className="mb-5 flex items-baseline gap-3.5 border-b border-[#e9ecef] pb-3 text-xl leading-[25px] font-bold">
          여행 장소
          <span className="text-sm leading-5 font-normal text-[#6c757d]">5개 장소</span>
        </h2>
        <button type="button" className="flex h-[37px] items-center gap-1 rounded bg-[#fd7e14] px-3 text-sm font-medium text-white">
          <MapIcon />
          지도 닫기
        </button>
      </div>
      <ol className="flex flex-col gap-6">
        {places.map((place, index) => (
          <li key={place.name} className="flex gap-5">
            <div className="flex w-10 flex-col items-center gap-2">
              <span className="flex size-10 items-center justify-center rounded-full bg-[#4a6ee0] text-sm font-bold text-white">
                {index + 1}
              </span>
              <span className="w-0.5 flex-1 bg-[#e9ecef]" />
            </div>
            <article className="flex-1 rounded-lg border-l-4 border-[#4a6ee0] bg-[#f8f9fb] px-4 pt-4 pb-8">
              <div className="mb-3 flex items-center justify-between">
                <h3 className="text-lg leading-[27px] font-bold">{place.name}</h3>
                <span className="rounded bg-[#e9ecef] px-2 text-[13px] leading-[27px] text-[#495057]">{place.kind}</span>
              </div>
              <p className="flex items-center gap-1.5 text-sm leading-[21px] text-[#6c757d]">
                <span className="flex w-5 justify-center"><PushpinIcon /></span>
                {place.address}
              </p>
            </article>
          </li>
        ))}
      </ol>
    </section>
  );
}

function ScrollRail() {
  return (
    <div className="flex w-[15px] shrink-0 flex-col items-center justify-between bg-[#2b2b2b] py-[5px]" aria-hidden="true">
      <svg viewBox="0 0 9 7" className="mb-1.5 h-[7px] w-[9px] shrink-0">
        <path d="M4.500 0L9 6V7H0V6Z" fill="#9f9f9f" />
      </svg>
      <div className="w-full flex-1">
        <div className="mx-auto h-[69%] w-[9px] rounded-full bg-[#9f9f9f]" />
      </div>
      <svg viewBox="0 0 9 7" className="h-[7px] w-[9px] shrink-0">
        <path d="M4.500 7L9 1V0H0V1Z" fill="#9f9f9f" />
      </svg>
    </div>
  );
}

export default function App() {
  return (
    <div className="relative flex h-screen overflow-hidden bg-white font-['Noto_Sans','Noto_Sans_CJK_KR',sans-serif] text-[#333333]">
      <div className="flex min-w-0 flex-1 flex-col">
        <Header />
        <main className="flex-1 overflow-y-auto [scrollbar-width:none]">
          <div className="mx-auto max-w-[1000px] bg-[#f8f9fb] p-6">
            <Summary />
            <Info />
            <TripMap />
            <Places />
          </div>
        </main>
      </div>
      <ScrollRail />
      <button
        type="button"
        aria-label="Vue DevTools"
        className="absolute bottom-0 left-1/2 flex h-6 w-8 -translate-x-1/2 justify-center rounded-t-full bg-[#111111] pt-2 shadow-[2px_0_8px_rgba(0,0,0,0.4)]"
      >
        <svg viewBox="0 0 14 13" className="h-[13px] w-[14px]" aria-hidden="true">
          <path d="M0 0H3L7 7.500 11 0H14L7 13Z" fill="#8b8b8b" />
          <path d="M3 0H5.500L7 3 8.500 0H11L7 7.500Z" fill="#4a4a4a" />
        </svg>
      </button>
    </div>
  );
}
